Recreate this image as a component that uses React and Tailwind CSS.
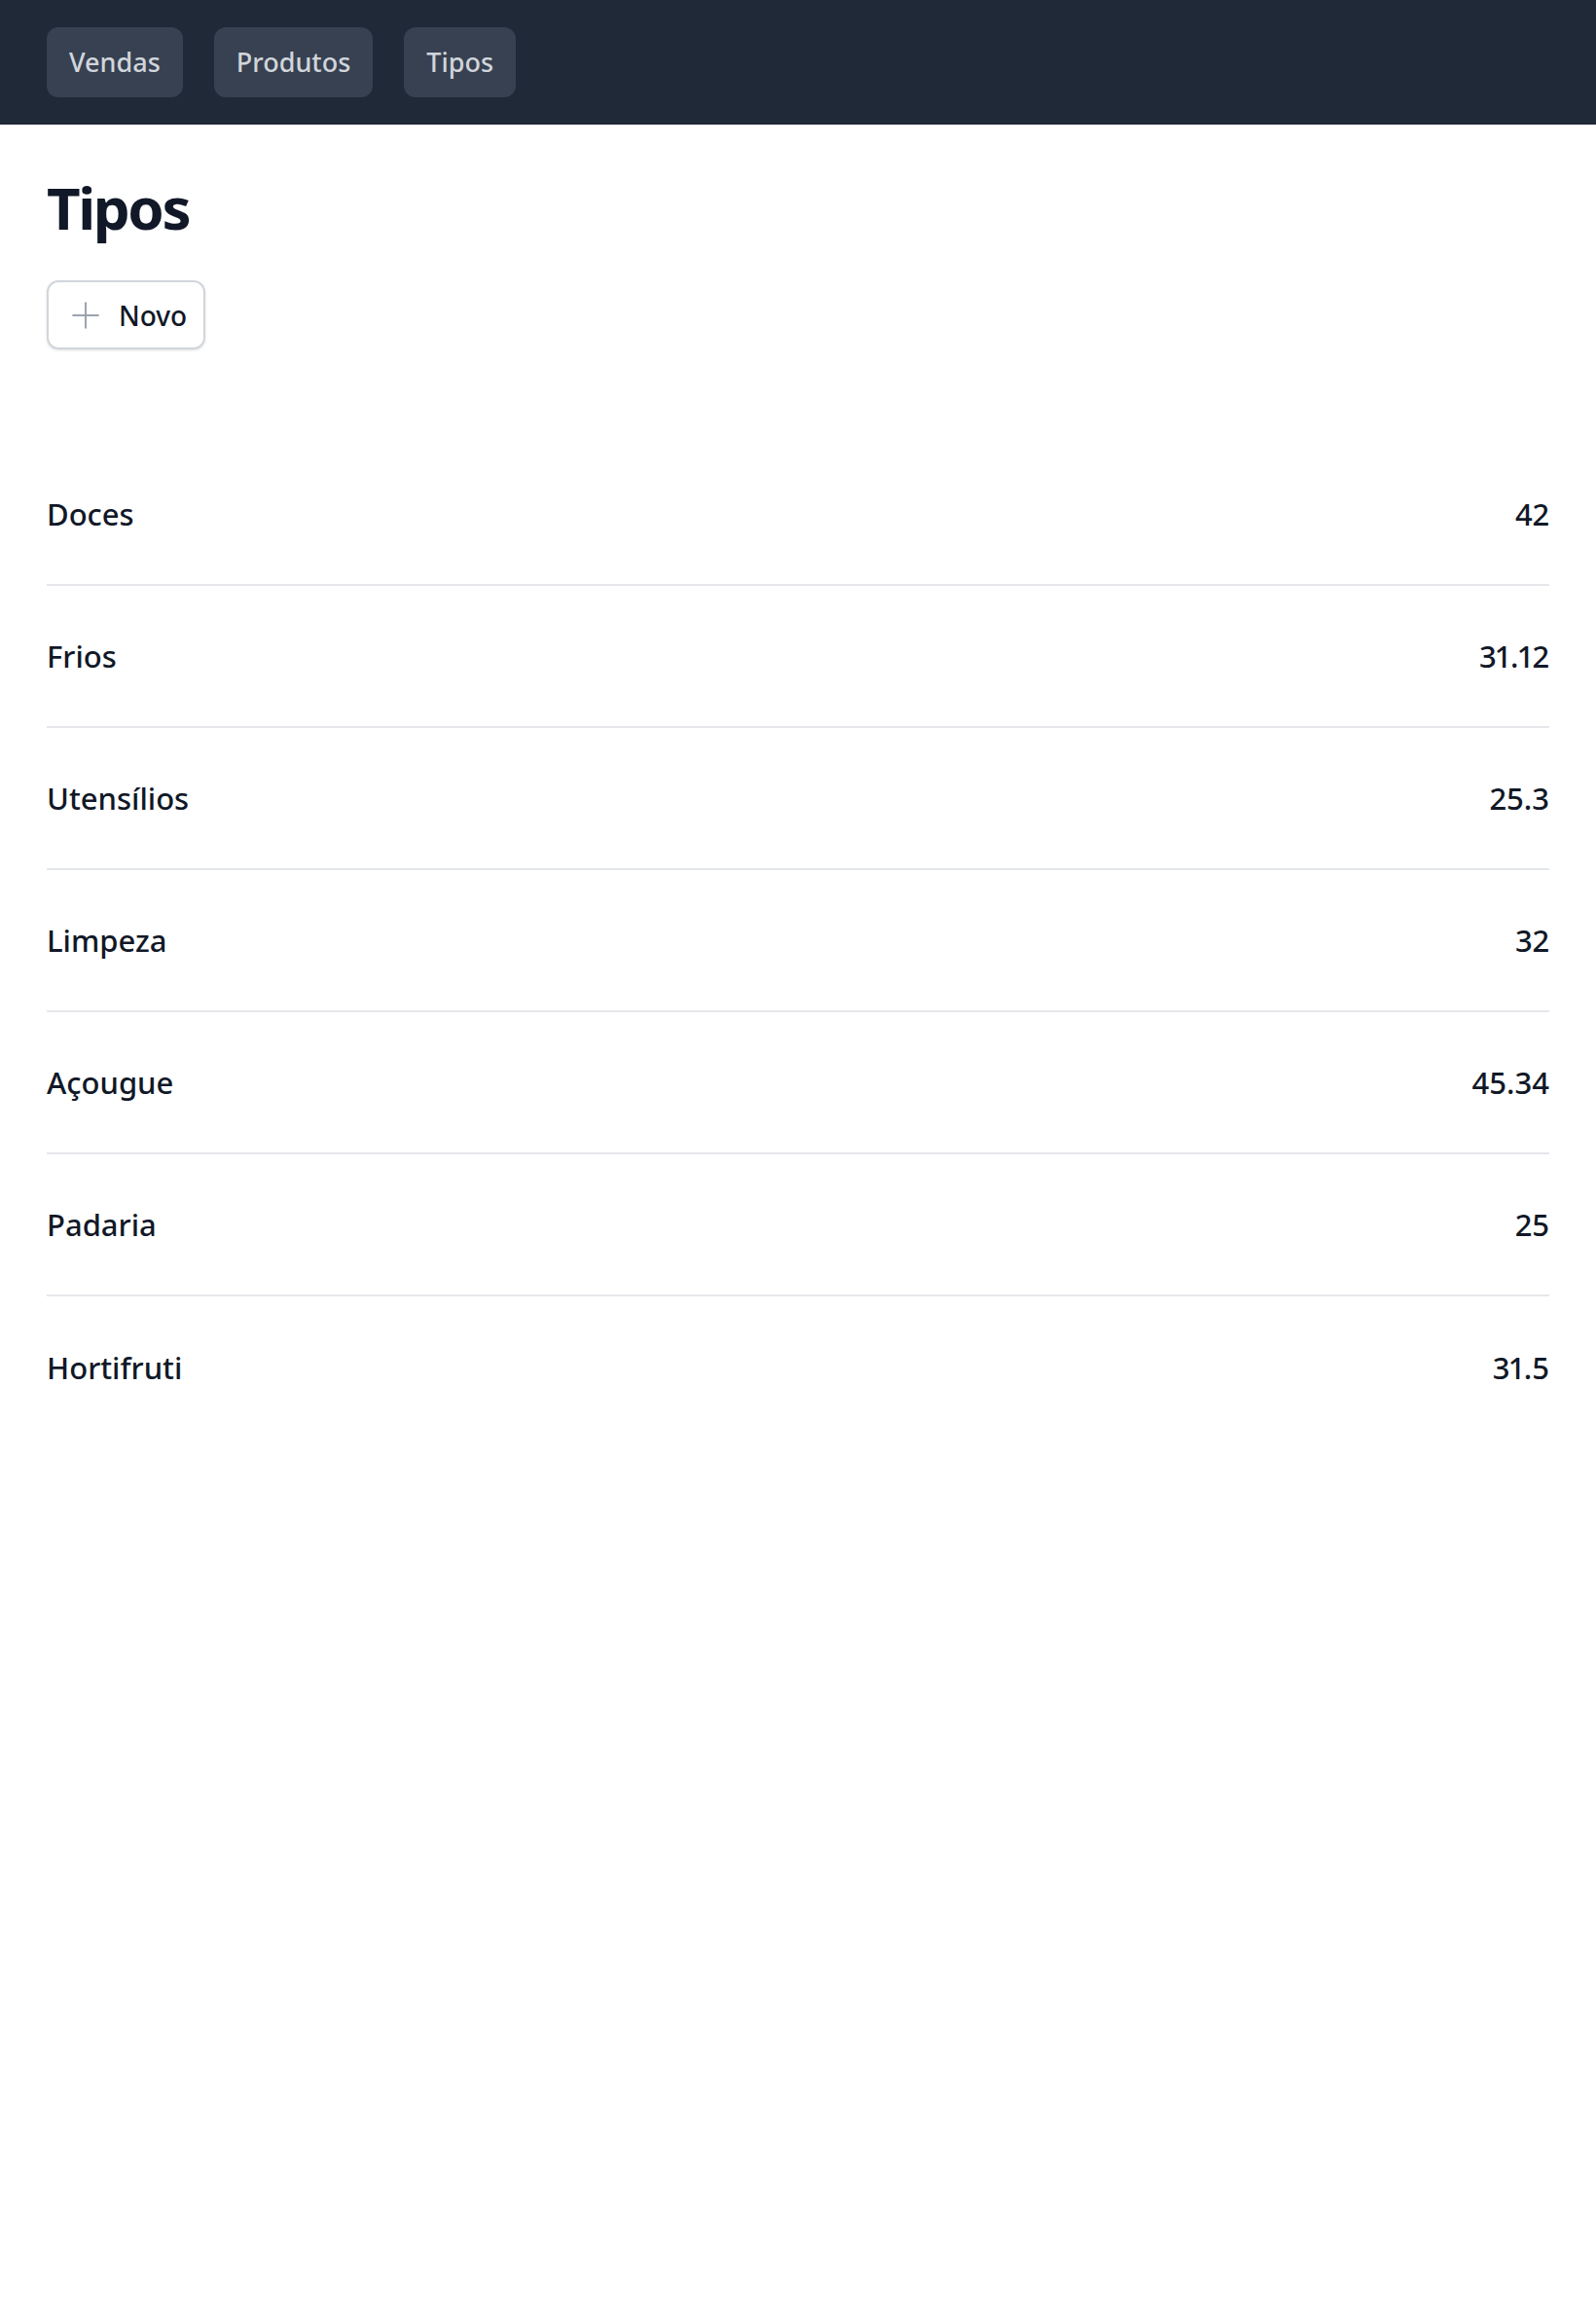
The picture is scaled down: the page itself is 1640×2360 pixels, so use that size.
import React from "react";

const rows = [
  ["Doces", "42"],
  ["Frios", "31.12"],
  ["Utensílios", "25.3"],
  ["Limpeza", "32"],
  ["Açougue", "45.34"],
  ["Padaria", "25"],
  ["Hortifruti", "31.5"],
];

export default function App() {
  return (
    <div className="min-h-[2360px] bg-white" style={{ fontFamily: '"Noto Sans", "Open Sans", sans-serif' }}>
      <nav className="h-[128px] bg-[#1f2937] flex items-center gap-[32px] px-[48px]">
        {["Vendas", "Produtos", "Tipos"].map((t) => (
          <button key={t} className="h-[72px] px-[23px] rounded-[12px] bg-[#374151] text-[#d1d5db] text-[27px] font-medium">
            {t}
          </button>
        ))}
      </nav>
      <main className="px-[48px]">
        <h1 className="mt-[49px] text-[60px] leading-[72px] font-bold tracking-[-0.04em] text-[#111827]">Tipos</h1>
        <button className="mt-[39px] h-[71px] w-[163px] flex items-center gap-[20px] pl-[24px] border-2 border-[#d1d5db] rounded-[12px] shadow-sm text-[#111827] text-[28px] font-medium">
          <svg width="28" height="28" viewBox="0 0 24 24" fill="none" stroke="#9ca3af" strokeWidth="1.75" strokeLinecap="round">
            <path d="M12 1v22M1 12h22" />
          </svg>
          Novo
        </button>
        <div className="mt-[97px] divide-y-2 divide-[#e5e7eb]">
          {rows.map(([n, v]) => (
            <div key={n} className="h-[146px] flex items-center justify-between text-[31px] font-medium text-[#111827] proportional-nums">
              <span>{n}</span>
              <span>{v}</span>
            </div>
          ))}
        </div>
      </main>
    </div>
  );
}
